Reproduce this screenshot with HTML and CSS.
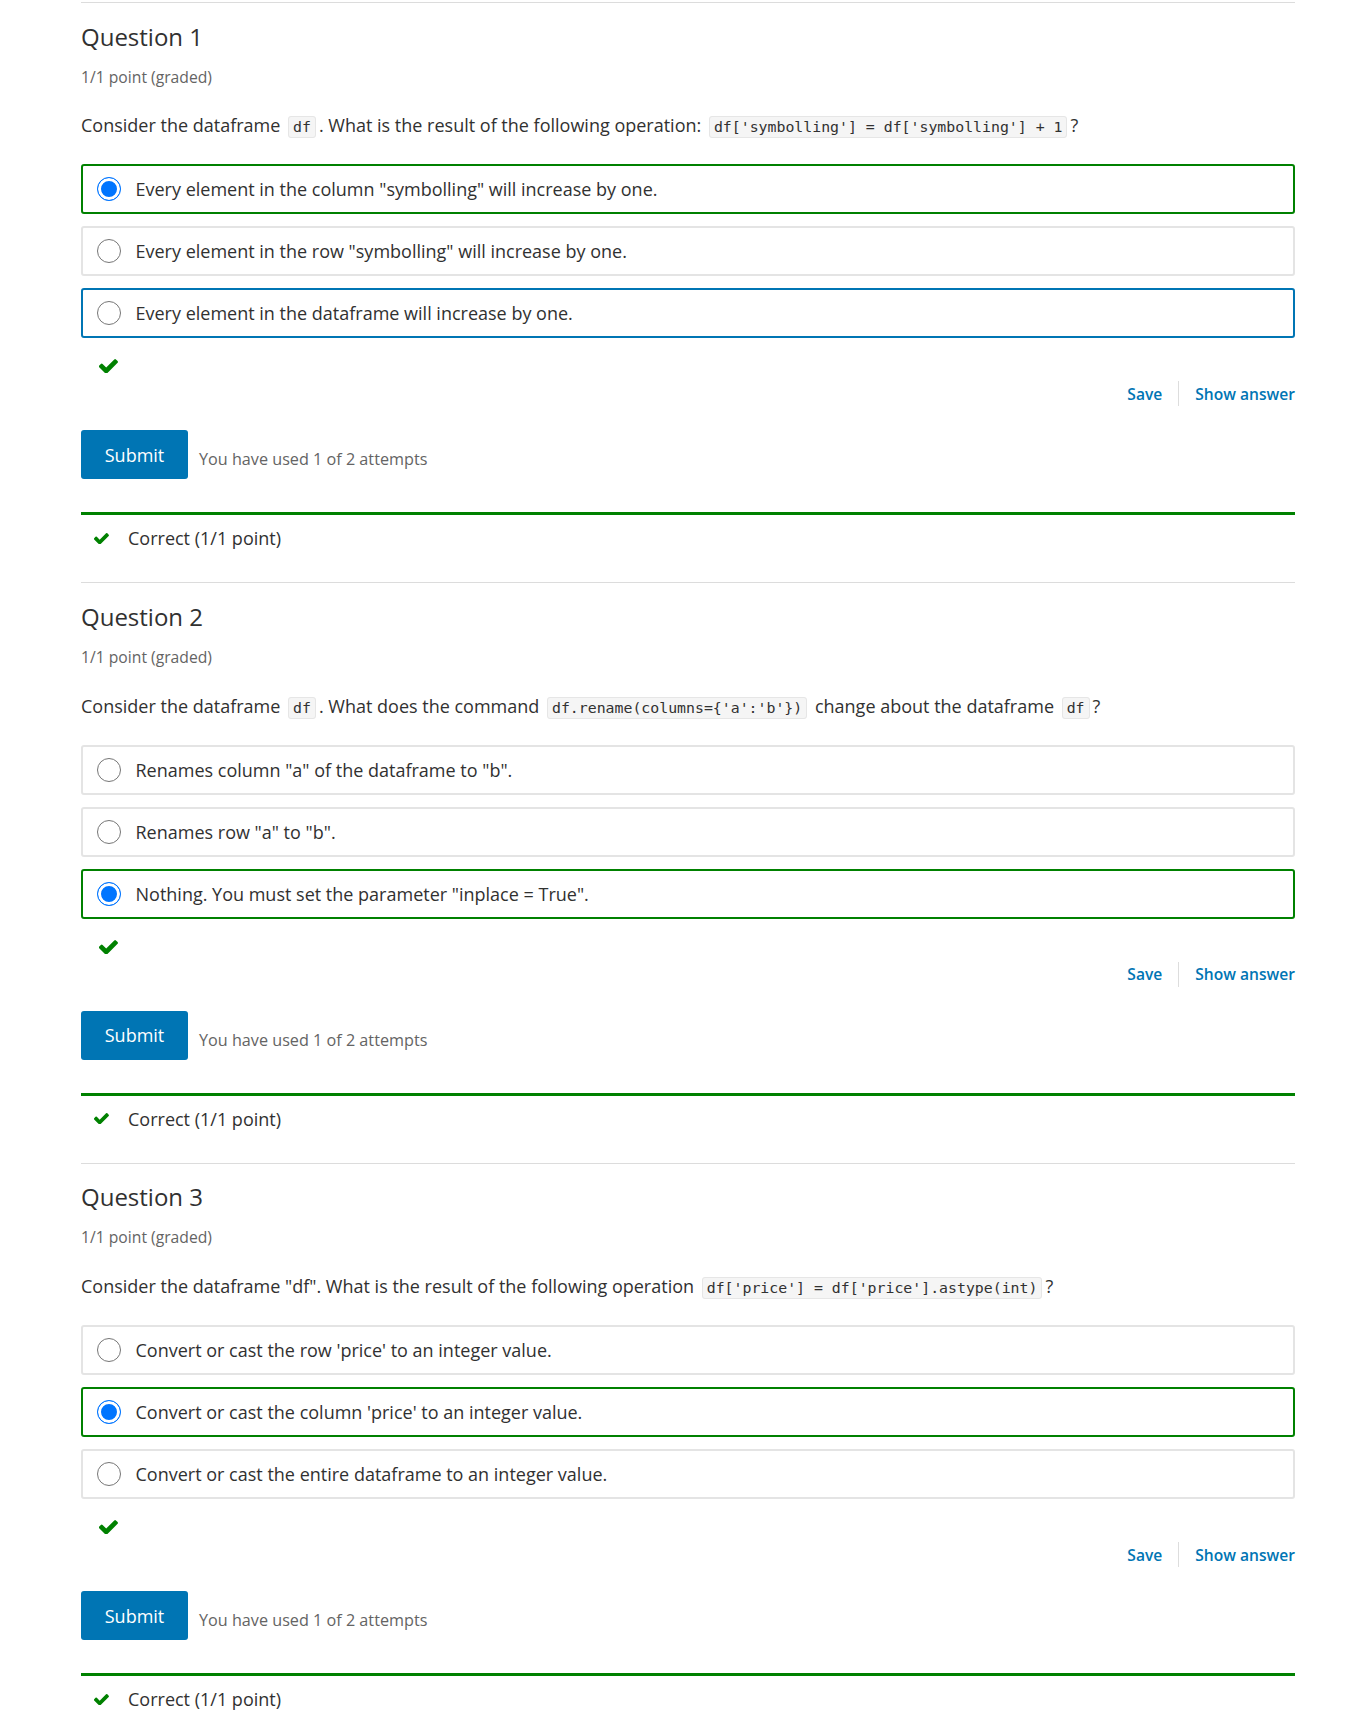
FILE: index.html
```html
<!DOCTYPE html>
<html lang="en">
<head>
<meta charset="utf-8">
<title>Quiz</title>
<link rel="stylesheet" href="styles.css">
</head>
<body>
<div class="page">

  <section class="problem">
    <h2 class="title">Question 1</h2>
    <div class="points">1/1 point (graded)</div>
    <p class="question">Consider the dataframe <code class="code">df</code>. What is the result of the following operation: <code class="code">df['symbolling'] = df['symbolling'] + 1</code>?</p>
    <div class="options">
      <label class="option correct"><span class="radio checked"></span><span>Every element in the column "symbolling" will increase by one.</span></label>
      <label class="option"><span class="radio"></span><span>Every element in the row "symbolling" will increase by one.</span></label>
      <label class="option focus"><span class="radio"></span><span>Every element in the dataframe will increase by one.</span></label>
    </div>
    <div class="check-row"><svg class="check big" viewBox="130 330 1545 1130"><path d="M1671 566q0 40-28 68l-724 724-136 136q-28 28-68 28t-68-28l-136-136-362-362q-28-28-28-68t28-68l136-136q28-28 68-28t68 28l294 295 656-657q28-28 68-28t68 28l136 136q28 28 28 68z"/></svg></div>
    <div class="actions"><a class="action">Save</a><span class="divider"></span><a class="action">Show answer</a></div>
    <div class="submit-row"><button class="submit">Submit</button><span class="attempts">You have used 1 of 2 attempts</span></div>
    <div class="result"><svg class="check small" viewBox="130 330 1545 1130"><path d="M1671 566q0 40-28 68l-724 724-136 136q-28 28-68 28t-68-28l-136-136-362-362q-28-28-28-68t28-68l136-136q28-28 68-28t68 28l294 295 656-657q28-28 68-28t68 28l136 136q28 28 28 68z"/></svg><span>Correct (1/1 point)</span></div>
  </section>

  <section class="problem">
    <h2 class="title">Question 2</h2>
    <div class="points">1/1 point (graded)</div>
    <p class="question">Consider the dataframe <code class="code">df</code>. What does the command <code class="code">df.rename(columns={'a':'b'})</code> change about the dataframe <code class="code">df</code>?</p>
    <div class="options">
      <label class="option"><span class="radio"></span><span>Renames column "a" of the dataframe to "b".</span></label>
      <label class="option"><span class="radio"></span><span>Renames row "a" to "b".</span></label>
      <label class="option correct"><span class="radio checked"></span><span>Nothing. You must set the parameter "inplace = True".</span></label>
    </div>
    <div class="check-row"><svg class="check big" viewBox="130 330 1545 1130"><path d="M1671 566q0 40-28 68l-724 724-136 136q-28 28-68 28t-68-28l-136-136-362-362q-28-28-28-68t28-68l136-136q28-28 68-28t68 28l294 295 656-657q28-28 68-28t68 28l136 136q28 28 28 68z"/></svg></div>
    <div class="actions"><a class="action">Save</a><span class="divider"></span><a class="action">Show answer</a></div>
    <div class="submit-row"><button class="submit">Submit</button><span class="attempts">You have used 1 of 2 attempts</span></div>
    <div class="result"><svg class="check small" viewBox="130 330 1545 1130"><path d="M1671 566q0 40-28 68l-724 724-136 136q-28 28-68 28t-68-28l-136-136-362-362q-28-28-28-68t28-68l136-136q28-28 68-28t68 28l294 295 656-657q28-28 68-28t68 28l136 136q28 28 28 68z"/></svg><span>Correct (1/1 point)</span></div>
  </section>

  <section class="problem">
    <h2 class="title">Question 3</h2>
    <div class="points">1/1 point (graded)</div>
    <p class="question">Consider the dataframe "df". What is the result of the following operation <code class="code">df['price'] = df['price'].astype(int)</code>?</p>
    <div class="options">
      <label class="option"><span class="radio"></span><span>Convert or cast the row 'price' to an integer value.</span></label>
      <label class="option correct"><span class="radio checked"></span><span>Convert or cast the column 'price' to an integer value.</span></label>
      <label class="option"><span class="radio"></span><span>Convert or cast the entire dataframe to an integer value.</span></label>
    </div>
    <div class="check-row"><svg class="check big" viewBox="130 330 1545 1130"><path d="M1671 566q0 40-28 68l-724 724-136 136q-28 28-68 28t-68-28l-136-136-362-362q-28-28-28-68t28-68l136-136q28-28 68-28t68 28l294 295 656-657q28-28 68-28t68 28l136 136q28 28 28 68z"/></svg></div>
    <div class="actions"><a class="action">Save</a><span class="divider"></span><a class="action">Show answer</a></div>
    <div class="submit-row"><button class="submit">Submit</button><span class="attempts">You have used 1 of 2 attempts</span></div>
    <div class="result"><svg class="check small" viewBox="130 330 1545 1130"><path d="M1671 566q0 40-28 68l-724 724-136 136q-28 28-68 28t-68-28l-136-136-362-362q-28-28-28-68t28-68l136-136q28-28 68-28t68 28l294 295 656-657q28-28 68-28t68 28l136 136q28 28 28 68z"/></svg><span>Correct (1/1 point)</span></div>
  </section>

</div>
</body>
</html>
```

FILE: styles.css
```css
body {
  margin: 0;
  background: #fff;
  font-family: "Open Sans", "Noto Sans", sans-serif;
  color: #313131;
}

.page {
  margin-left: 81px;
  width: 1214px;
  padding-top: 2px;
}

.problem {
  border-top: 1px solid #dcdcdc;
  padding-bottom: 31px;
}

.title {
  margin: 18.5px 0 0;
  font-size: 24px;
  font-weight: 400;
  line-height: 30px;
  color: #313131;
}

.points {
  margin-top: 14px;
  font-size: 15.7px;
  line-height: 22px;
  color: #646464;
}

.question {
  margin: 24.6px 0 0;
  height: 26px;
  font-size: 18px;
  line-height: 26px;
  color: #313131;
}

.code {
  font-family: "DejaVu Sans Mono", "Liberation Mono", monospace;
  font-size: 14.85px;
  line-height: 1;
  background: #f5f5f5;
  border: 1px solid #e6e6e6;
  border-radius: 3px;
  padding: 1px 4px;
  margin: 0 3px;
  color: #313131;
}

.options {
  margin-top: 26.4px;
  display: flex;
  flex-direction: column;
  gap: 12px;
}

.option {
  height: 50px;
  box-sizing: border-box;
  border: 2px solid #e4e4e4;
  border-radius: 3px;
  display: flex;
  align-items: center;
  gap: 14.5px;
  padding-left: 14px;
  font-size: 18px;
  color: #313131;
}

.option.correct {
  border-color: #008100;
}

.option.focus {
  border-color: #0075b4;
}

.radio {
  flex: none;
  width: 24px;
  height: 24px;
  box-sizing: border-box;
  border-radius: 50%;
  border: 1.5px solid #767676;
  background: #fff;
}

.radio.checked {
  border: 1.5px solid #0075ff;
  background: #0075ff;
  box-shadow: inset 0 0 0 3px #fff;
}

.check {
  display: block;
  fill: #008100;
}

.check.big {
  width: 19px;
  height: 14px;
}

.check.small {
  width: 15px;
  height: 11px;
  flex: none;
}

.check-row {
  margin-top: 21px;
  padding-left: 18.3px;
  height: 14px;
}

.actions {
  margin-top: 8px;
  height: 25px;
  display: flex;
  justify-content: flex-end;
  align-items: center;
}

.action {
  color: #0075b4;
  font-size: 15.6px;
  font-weight: 600;
  line-height: 22px;
}

.divider {
  width: 1px;
  height: 25px;
  background: #dddddd;
  margin: 0 16px;
}

.submit-row {
  margin-top: 24px;
  display: flex;
  align-items: center;
}

.submit {
  width: 107px;
  height: 49px;
  background: #0075b4;
  color: #fff;
  border: none;
  border-radius: 3px;
  font-family: "Open Sans", sans-serif;
  font-size: 18px;
  padding: 0;
}

.attempts {
  margin-left: 11px;
  padding-top: 9px;
  font-size: 16.2px;
  color: #646464;
}

.result {
  margin-top: 33px;
  border-top: 3px solid #008100;
  padding-top: 10px;
  height: 26px;
  display: flex;
  align-items: center;
  font-size: 18px;
  color: #313131;
}

.result .check {
  margin-left: 13px;
  margin-right: 19px;
}
```
